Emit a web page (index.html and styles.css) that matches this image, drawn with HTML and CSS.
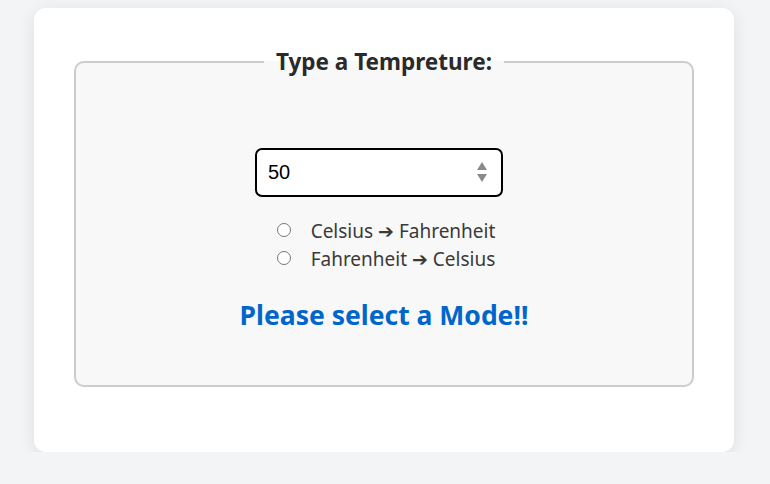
FILE: index.html
```html
<!DOCTYPE html>
<html>
<head>
<meta charset="utf-8">
<link rel="stylesheet" href="styles.css">
</head>
<body>
<main class="card">
  <fieldset class="box">
    <legend class="legend">Type a Tempreture:</legend>
    <div class="field">
      <input class="num" type="number" value="50">
      <svg class="spin" width="12" height="22" viewBox="0 0 12 22"><path d="M6 1 L11 9 L1 9 Z" fill="#8a8a8a"/><path d="M1 13 L11 13 L6 21 Z" fill="#8a8a8a"/></svg>
    </div>
    <div class="modes">
      <label class="mode"><input class="radio" type="radio" name="m"><span>Celsius <span class="arrow">➔</span> Fahrenheit</span></label>
      <label class="mode"><input class="radio" type="radio" name="m"><span>Fahrenheit <span class="arrow">➔</span> Celsius</span></label>
    </div>
    <p class="msg">Please select a Mode!!</p>
  </fieldset>
</main>
</body>
</html>
```
FILE: styles.css
```css
html, body { margin: 0; padding: 0; }
body {
  background: #f3f4f6;
  font-family: "Noto Sans", "Open Sans", sans-serif;
  color: #333;
  padding: 8px 36px 0 34px;
}
.card {
  width: 700px;
  height: 444px;
  box-sizing: border-box;
  background: #fff;
  border-radius: 12px;
  box-shadow: 0 4px 18px rgba(0,0,0,0.09);
  padding: 38px 40px 65px 40px;
}
.box {
  margin: 0;
  height: 100%;
  box-sizing: border-box;
  border: 2px solid #cccccc;
  border-radius: 10px;
  background: #f8f8f8;
  padding: 0 20px;
  display: flex;
  flex-direction: column;
  align-items: center;
}
.legend {
  margin: 0 auto;
  padding: 0 12px;
  font-size: 22.5px;
  font-weight: 700;
  line-height: 32px;
  color: #2a2a2a;
}
.field {
  position: relative;
  margin-top: 70px;
  margin-right: 10px;
}
.num {
  width: 248px;
  height: 49px;
  box-sizing: border-box;
  border: 2px solid #000;
  border-radius: 7px;
  background: #fff;
  padding: 0 11px;
  font-family: "Liberation Sans", Arial, sans-serif;
  font-size: 20px;
  color: #000;
  -moz-appearance: textfield;
  appearance: textfield;
  display: block;
  outline: none;
}
.num::-webkit-inner-spin-button, .num::-webkit-outer-spin-button {
  -webkit-appearance: none;
  margin: 0;
}
.spin {
  position: absolute;
  right: 15px;
  top: 13px;
}
.modes {
  margin-top: 20px;
  display: flex;
  flex-direction: column;
  margin-left: 4px;
}
.mode {
  display: flex;
  align-items: center;
  height: 28px;
  font-size: 19px;
  line-height: 28px;
  color: #3a3a3a;
}
.radio {
  width: 14px;
  height: 14px;
  margin: 0 20px 3px 0;
}
.arrow {
  font-family: "DejaVu Sans", sans-serif;
  font-size: 19px;
  line-height: 1;
}
.msg {
  margin: 25px 0 0 0;
  font-size: 26.5px;
  font-weight: 700;
  color: #0066cc;
  line-height: 34px;
}
```
